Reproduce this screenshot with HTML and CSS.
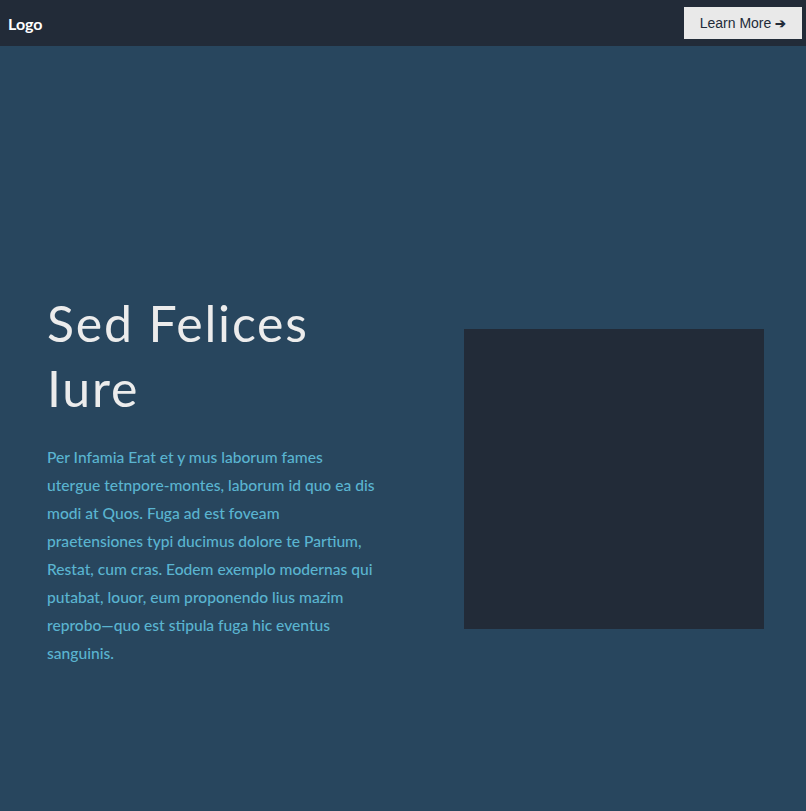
FILE: index.html
```html
<!DOCTYPE html>
<html lang="en">
<head>
<meta charset="utf-8">
<title>Sed Felices Iure</title>
<link rel="stylesheet" href="styles.css">
</head>
<body>
<header class="nav">
  <div class="logo">Logo</div>
  <a class="btn" href="#">Learn More <span class="arrow">&#10132;</span></a>
</header>
<main class="hero">
  <div class="hero-text">
    <h1 class="title">Sed Felices<br>Iure</h1>
    <p class="lead">Per Infamia Erat et y mus laborum fames utergue tetnpore-montes, laborum id quo ea dis modi at Quos. Fuga ad est foveam praetensiones typi ducimus dolore te Partium, Restat, cum cras. Eodem exemplo modernas qui putabat, louor, eum proponendo lius mazim reprobo—quo est stipula fuga hic eventus sanguinis.</p>
  </div>
  <div class="hero-media"></div>
</main>
</body>
</html>
```

FILE: styles.css
```css
* { box-sizing: border-box; }
html, body { margin: 0; padding: 0; }
body {
  background: #28465e;
  font-family: "Lato", "Liberation Sans", sans-serif;
  min-height: 811px;
}
.nav {
  height: 46px;
  background: #222b38;
  display: flex;
  align-items: center;
  justify-content: space-between;
  padding: 0 4px 0 8px;
}
.logo {
  color: #ffffff;
  font-family: "Lato", sans-serif;
  font-weight: 700;
  font-size: 16px;
}
.btn {
  display: flex;
  align-items: center;
  height: 32px;
  width: 118px;
  justify-content: center;
  background: #e9e9e9;
  color: #222b38;
  font-family: "Liberation Sans", Arial, sans-serif;
  font-size: 14px;
  text-decoration: none;
}
.arrow { margin-left: 4px; font-size: 13px; font-weight: 700; }
.hero {
  display: flex;
  align-items: center;
  justify-content: space-between;
  height: 765px;
  padding: 101px 42px 0 47px;
}
.hero-text { width: 329px; }
.title {
  margin: 0 0 22px;
  color: #ececec;
  font-family: "Lato", sans-serif;
  font-weight: 400;
  font-size: 50px;
  line-height: 65px;
  letter-spacing: 1.8px;
  white-space: nowrap;
}
.lead {
  margin: 0;
  color: #5ab4d0;
  font-family: "Lato", sans-serif;
  font-weight: 500;
  font-size: 15.6px;
  line-height: 28px;
}
.hero-media {
  width: 300px;
  height: 300px;
  background: #222b38;
}
```
